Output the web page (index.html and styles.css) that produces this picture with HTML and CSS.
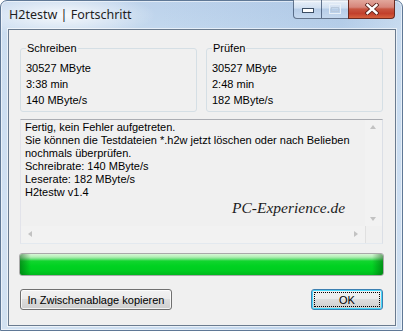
FILE: index.html
```html
<!DOCTYPE html>
<html>
<head>
<meta charset="utf-8">
<title>H2testw | Fortschritt</title>
<link rel="stylesheet" href="styles.css">
</head>
<body>
<div class="window">
  <div class="titlebar">
    <div class="title">H2testw | Fortschritt</div>
    <div class="caption-buttons">
      <div class="cbtn min">
        <svg width="12" height="5" viewBox="0 0 12 5"><rect x="0.5" y="0.5" width="11" height="4" fill="#fff" stroke="#3b4d63" stroke-width="1"/></svg>
      </div>
      <div class="cbtn max">
        <svg width="12" height="10" viewBox="0 0 12 10"><rect x="0.5" y="0.5" width="11" height="9" fill="none" stroke="#e8f0f8" stroke-width="1"/><rect x="2.5" y="3.5" width="7" height="4" fill="none" stroke="#b9c9dc" stroke-width="1"/></svg>
      </div>
      <div class="cbtn close">
        <svg width="14" height="12" viewBox="0 0 14 12"><path d="M2.5 2 L11.5 10 M11.5 2 L2.5 10" stroke="#5a2018" stroke-width="4.2" stroke-linecap="square"/><path d="M2.5 2 L11.5 10 M11.5 2 L2.5 10" stroke="#fff" stroke-width="2.4" stroke-linecap="square"/></svg>
      </div>
    </div>
  </div>
  <div class="client">
    <div class="groups">
      <fieldset class="group">
        <legend>Schreiben</legend>
        <div class="row">30527 MByte</div>
        <div class="row">3:38 min</div>
        <div class="row">140 MByte/s</div>
      </fieldset>
      <fieldset class="group">
        <legend>Prüfen</legend>
        <div class="row">30527 MByte</div>
        <div class="row">2:48 min</div>
        <div class="row">182 MByte/s</div>
      </fieldset>
    </div>
    <div class="log">
      <div class="log-text">Fertig, kein Fehler aufgetreten.<br>Sie können die Testdateien *.h2w jetzt löschen oder nach Belieben<br>nochmals überprüfen.<br>Schreibrate: 140 MByte/s<br>Leserate: 182 MByte/s<br>H2testw v1.4</div>
      <div class="vscroll">
        <span class="arrow up"></span>
        <span class="arrow down"></span>
      </div>
      <div class="hscroll">
        <span class="arrow left"></span>
        <span class="arrow right"></span>
      </div>
      <div class="corner"></div>
      <div class="watermark">PC-Experience.de</div>
    </div>
    <div class="progress"><div class="fill"></div></div>
    <div class="buttons">
      <button class="btn copy">In Zwischenablage kopieren</button>
      <button class="btn ok"><span class="focus">OK</span></button>
    </div>
  </div>
</div>
</body>
</html>
```
FILE: styles.css
```css
* { box-sizing: border-box; }
html, body { margin: 0; padding: 0; }
body {
  width: 403px;
  height: 331px;
  overflow: hidden;
  background: #ffffff;
  font-family: "Liberation Sans", Arial, sans-serif;
  font-size: 11px;
  color: #000;
}
.window {
  position: relative;
  width: 403px;
  height: 331px;
  border: 1px solid #5f7896;
  border-radius: 7px 7px 0 0;
  background:
    radial-gradient(ellipse 95px 22px at 60px 14px, rgba(255,255,255,0.85), rgba(255,255,255,0) 100%),
    linear-gradient(to right, rgba(255,255,255,0.15), rgba(255,255,255,0) 40%, rgba(120,160,210,0.18) 85%, rgba(255,255,255,0.1)),
    linear-gradient(to bottom, #bcd2eb 0, #c3d8ee 30px, #c8dbf0 200px, #cadcef 100%);
  box-shadow: inset 0 0 0 1px rgba(255,255,255,0.55);
}
.titlebar {
  height: 28px;
  display: flex;
  justify-content: space-between;
  align-items: flex-start;
  padding: 0 7px 0 8px;
}
.title {
  font-family: "Noto Sans", "Open Sans", sans-serif;
  font-size: 12.5px;
  line-height: 16px;
  padding-top: 6px;
  color: #1e1e1e;
}
.caption-buttons {
  display: flex;
  height: 19px;
  margin-top: -1px;
}
.cbtn {
  height: 19px;
  display: flex;
  align-items: center;
  justify-content: center;
  border: 1px solid rgba(55,75,105,0.75);
  border-top: none;
}
.cbtn.min {
  width: 28px;
  border-right: none;
  border-radius: 0 0 0 4px;
  background: linear-gradient(to bottom, rgba(255,255,255,0.75) 0, rgba(230,238,248,0.6) 45%, rgba(185,205,230,0.55) 50%, rgba(205,222,242,0.7) 100%);
  padding-top: 3px;
}
.cbtn.max {
  width: 27px;
  border-right: none;
  background: linear-gradient(to bottom, rgba(255,255,255,0.75) 0, rgba(230,238,248,0.6) 45%, rgba(185,205,230,0.55) 50%, rgba(205,222,242,0.7) 100%);
}
.cbtn.close {
  width: 47px;
  border-color: #6b2a20;
  border-radius: 0 0 4px 0;
  background: linear-gradient(to bottom, #e2a79c 0, #d6857a 40%, #c75541 50%, #c2402c 75%, #d6623f 100%);
}
.client {
  margin-left: 7px;
  width: 388px;
  height: 297px;
  border: 1px solid #6a7b8f;
  box-shadow: 0 0 0 1px rgba(255,255,255,0.6);
  background: #f0f0f0;
  padding: 12px 0 0 11px;
}
.groups {
  display: flex;
  gap: 9px;
}
.group {
  width: 177px;
  margin: 0;
  border: 1px solid #d5dfe5;
  border-radius: 3px;
  padding: 5px 5px 3px 5px;
  min-width: 0;
}
.group legend {
  padding: 0 1px;
  margin-left: 0;
  line-height: 13px;
}
.row {
  line-height: 16px;
  height: 16px;
}
.log {
  position: relative;
  margin-top: 7px;
  width: 363px;
  height: 125px;
  border: 1px solid;
  border-color: #abadb3 #dbdfe6 #e3e9ef #e2e3ea;
  background: #f0f0f0;
  display: grid;
  grid-template-columns: 1fr 17px;
  grid-template-rows: 1fr 17px;
}
.log-text {
  padding: 1px 4px 0 4px;
  line-height: 13px;
  white-space: nowrap;
  overflow: hidden;
}
.vscroll {
  position: relative;
  background: #f2f2f2;
}
.hscroll {
  position: relative;
  background: #f2f2f2;
}
.corner {
  background: #f0f0f0;
  border-left: 1px solid #e0e0e0;
}
.arrow {
  position: absolute;
  width: 0;
  height: 0;
  border-style: solid;
  border-color: transparent;
}
.arrow.up { left: 5px; top: 5px; border-width: 0 3.5px 4px 3.5px; border-bottom-color: #c2c2c2; }
.arrow.down { left: 5px; bottom: 5px; border-width: 4px 3.5px 0 3.5px; border-top-color: #c2c2c2; }
.arrow.left { left: 7px; top: 5px; border-width: 3.5px 4px 3.5px 0; border-right-color: #c2c2c2; }
.arrow.right { right: 7px; top: 5px; border-width: 3.5px 0 3.5px 4px; border-left-color: #c2c2c2; }
.watermark {
  position: absolute;
  left: 211px;
  top: 78px;
  font-family: "Liberation Serif", "Times New Roman", serif;
  font-style: italic;
  font-size: 15.5px;
  line-height: 20px;
  color: #1c1c1c;
}
.progress {
  margin: 9px 0 0 -1px;
  width: 365px;
  height: 23px;
  border: 1px solid #a9a9a9;
  border-radius: 3px;
  background: #e6e6e6;
  padding: 0;
  overflow: hidden;
}
.fill {
  width: 100%;
  height: 100%;
  background:
    linear-gradient(to right, rgba(0,70,10,0.45) 0, rgba(0,70,10,0) 3%, rgba(0,70,10,0) 97%, rgba(0,70,10,0.45) 100%),
    linear-gradient(to bottom, #d9f7d9 0, #b2efb4 3px, #6fe17f 5px, #12d52e 7px, #00d221 12px, #00cc20 17px, #00b81d 21px);
}
.buttons {
  margin-top: 13px;
  width: 363px;
  display: flex;
  justify-content: space-between;
}
.btn {
  height: 21px;
  font-family: "Liberation Sans", Arial, sans-serif;
  font-size: 11px;
  color: #000;
  border: 1px solid #707070;
  border-radius: 3px;
  background: linear-gradient(to bottom, #f2f2f2 0, #ebebeb 50%, #dddddd 50%, #cfcfcf 100%);
  box-shadow: inset 0 0 0 1px rgba(255,255,255,0.75);
  padding: 0;
  margin: 0;
}
.btn.copy { width: 152px; }
.btn.ok {
  width: 72px;
  border-color: #3c7fb1;
  box-shadow: inset 0 0 0 1px #48d8fb;
  padding: 2px;
}
.btn.ok .focus {
  display: flex;
  align-items: center;
  justify-content: center;
  width: 100%;
  height: 100%;
  border: 1px dotted #000;
}
```
